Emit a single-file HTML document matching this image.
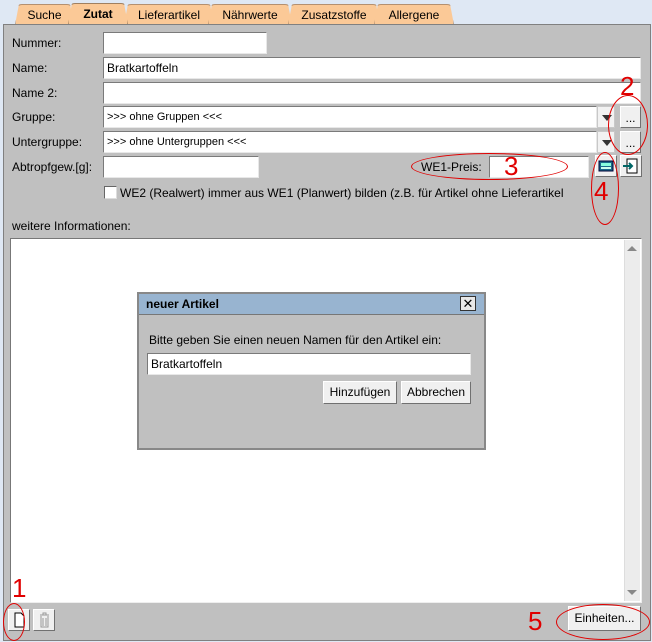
<!DOCTYPE html>
<html><head><meta charset="utf-8"><style>
*{margin:0;padding:0;box-sizing:border-box}
body{width:652px;height:642px;background:#dfe8f4;font-family:"Liberation Sans",Arial,sans-serif;font-size:12px;color:#000;position:relative;overflow:hidden}
.a{position:absolute}
.panel{left:3px;top:24px;width:648px;height:617px;background:#c0c0c0;border:1px solid #808080}
.tab{position:absolute;top:4px;height:21px;background:#fbc997;border:1px solid #b49070;border-bottom:none;border-radius:7px 7px 0 0;text-align:center;line-height:20px;font-size:12px;clip-path:polygon(4px 0,calc(100% - 4px) 0,100% 100%,0 100%)}
.tab.act{top:3px;height:22px;font-weight:bold;border-color:#a08060}
.in{position:absolute;background:#fff;border:1px solid #7a7a7a;border-right-color:#e8e8e8;border-bottom-color:#e8e8e8;height:22px;padding-left:3px;line-height:20px;font-size:12px}
.lbl{position:absolute;font-size:12px}
.btn{position:absolute;background:#f0f0f0;border:1px solid #fff;border-right-color:#707070;border-bottom-color:#707070;text-align:center;font-size:12px}
.arr{position:absolute;width:18px;height:22px;background:#f2f2f2;border:1px solid #c8c8c8}
.arr:after{content:"";position:absolute;left:4px;top:8px;border-left:5px solid transparent;border-right:5px solid transparent;border-top:6px solid #333}
.red{position:absolute;color:#e00000;font-size:26px;font-family:"Liberation Sans",sans-serif}
.ell{position:absolute;border:1.5px solid #e00000;border-radius:50%}
</style></head><body>
<div class="tab" style="left:15px;width:59px">Suche</div>
<div class="tab" style="left:124px;width:90px">Lieferartikel</div>
<div class="tab" style="left:208px;width:84px">Nährwerte</div>
<div class="tab" style="left:288px;width:92px">Zusatzstoffe</div>
<div class="tab" style="left:374px;width:80px">Allergene</div>
<div class="tab act" style="left:68px;width:60px">Zutat</div>
<div class="a panel"></div>

<div class="lbl" style="left:12px;top:36px">Nummer:</div>
<div class="in" style="left:103px;top:32px;width:164px"></div>
<div class="lbl" style="left:12px;top:61px">Name:</div>
<div class="in" style="left:103px;top:57px;width:538px">Bratkartoffeln</div>
<div class="lbl" style="left:12px;top:86px">Name 2:</div>
<div class="in" style="left:103px;top:82px;width:538px"></div>
<div class="lbl" style="left:12px;top:110px">Gruppe:</div>
<div class="in" style="left:103px;top:106px;width:494px;font-size:11px">&gt;&gt;&gt; ohne Gruppen &lt;&lt;&lt;</div>
<div class="arr" style="left:597px;top:106px"></div>
<div class="btn" style="left:620px;top:106px;width:21px;height:22px;line-height:22px">...</div>
<div class="lbl" style="left:12px;top:135px">Untergruppe:</div>
<div class="in" style="left:103px;top:131px;width:494px;font-size:11px">&gt;&gt;&gt; ohne Untergruppen &lt;&lt;&lt;</div>
<div class="arr" style="left:597px;top:131px"></div>
<div class="btn" style="left:620px;top:131px;width:21px;height:22px;line-height:22px">...</div>
<div class="lbl" style="left:12px;top:160px">Abtropfgew.[g]:</div>
<div class="in" style="left:103px;top:156px;width:156px"></div>
<div class="lbl" style="left:421px;top:160px">WE1-Preis:</div>
<div class="in" style="left:489px;top:156px;width:100px"></div>
<div class="btn" style="left:595px;top:155px;width:22px;height:22px"><svg width="20" height="20"><rect x="3" y="5" width="14" height="10" fill="#1a6a8a" stroke="#003" /><rect x="5" y="7" width="10" height="3" fill="#8fd"/><rect x="5" y="11" width="10" height="2" fill="#cfe"/></svg></div>
<div class="btn" style="left:620px;top:155px;width:22px;height:22px"><svg width="20" height="20"><rect x="6" y="3" width="10" height="14" fill="#fff" stroke="#000"/><path d="M2 10h9M8 7l3 3-3 3" stroke="#066" stroke-width="2" fill="none"/></svg></div>
<div class="a" style="left:104px;top:186px;width:13px;height:13px;background:#fff;border:1px solid #666;border-right-color:#ddd;border-bottom-color:#ddd"></div>
<div class="lbl" style="left:120px;top:186px">WE2 (Realwert) immer aus WE1 (Planwert) bilden (z.B. für Artikel ohne Lieferartikel</div>
<div class="lbl" style="left:12px;top:219px">weitere Informationen:</div>
<div class="a" style="left:10px;top:238px;width:632px;height:365px;background:#fff;border:1px solid #777;border-right-color:#eee;border-bottom-color:#eee"></div>
<div class="a" style="left:624px;top:240px;width:16px;height:361px;background:#ececec;border-left:1px solid #ddd"></div>
<div class="a" style="left:627px;top:246px;border-left:5px solid transparent;border-right:5px solid transparent;border-bottom:5px solid #888"></div>
<div class="a" style="left:627px;top:590px;border-left:5px solid transparent;border-right:5px solid transparent;border-top:5px solid #888"></div>

<div class="a" style="left:137px;top:292px;width:349px;height:158px;background:#c0c0c0;border:2px solid #888"></div>
<div class="a" style="left:139px;top:294px;width:345px;height:21px;background:#98b4d0;border-bottom:1px solid #777"></div>
<div class="lbl" style="left:146px;top:297px;font-weight:bold">neuer Artikel</div>
<div class="a" style="left:460px;top:296px;width:16px;height:15px;background:#e8e8e8;border:1px solid #333;text-align:center;line-height:13px;font-size:13px">✕</div>
<div class="lbl" style="left:149px;top:333px">Bitte geben Sie einen neuen Namen für den Artikel ein:</div>
<div class="in" style="left:147px;top:353px;width:324px">Bratkartoffeln</div>
<div class="btn" style="left:323px;top:381px;width:74px;height:23px;line-height:21px">Hinzufügen</div>
<div class="btn" style="left:401px;top:381px;width:70px;height:23px;line-height:21px">Abbrechen</div>

<div class="btn" style="left:8px;top:609px;width:22px;height:22px"><svg width="20" height="20"><path d="M6 3h6l3 3v11H6z" fill="#fff" stroke="#000"/></svg></div>
<div class="btn" style="left:33px;top:609px;width:22px;height:22px"><svg width="20" height="20"><path d="M6 5h9M7 6v11h7V6M9 8v8M12 8v8M9 5V3h3v2" fill="none" stroke="#999"/></svg></div>
<div class="btn" style="left:568px;top:606px;width:73px;height:25px;line-height:23px">Einheiten...</div>

<div class="red" style="left:620px;top:71px">2</div>
<div class="ell" style="left:608px;top:95px;width:40px;height:60px"></div>
<div class="red" style="left:504px;top:151px">3</div>
<div class="ell" style="left:411px;top:153px;width:157px;height:27px"></div>
<div class="red" style="left:594px;top:176px">4</div>
<div class="ell" style="left:591px;top:152px;width:28px;height:73px"></div>
<div class="red" style="left:12px;top:573px">1</div>
<div class="ell" style="left:3px;top:603px;width:22px;height:38px"></div>
<div class="red" style="left:528px;top:606px">5</div>
<div class="ell" style="left:556px;top:604px;width:94px;height:36px"></div>
</body></html>
